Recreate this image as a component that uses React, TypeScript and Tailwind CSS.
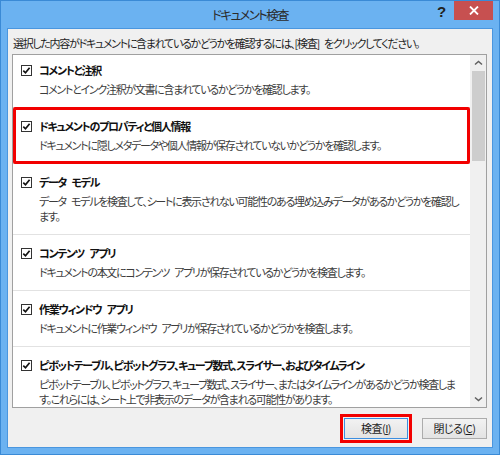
const items = [
  {
    title: "コメントと注釈",
    desc: ["コメントとインク注釈が文書に含まれているかどうかを確認します。"],
  },
  {
    title: "ドキュメントのプロパティと個人情報",
    desc: ["ドキュメントに隠しメタデータや個人情報が保存されていないかどうかを確認します。"],
    marked: true,
  },
  {
    title: "データ モデル",
    desc: [
      "データ モデルを検査して、シートに表示されない可能性のある埋め込みデータがあるかどうかを確認し",
      "ます。",
    ],
  },
  {
    title: "コンテンツ アプリ",
    desc: ["ドキュメントの本文にコンテンツ アプリが保存されているかどうかを検査します。"],
  },
  {
    title: "作業ウィンドウ アプリ",
    desc: ["ドキュメントに作業ウィンドウ アプリが保存されているかどうかを検査します。"],
  },
  {
    title: "ピボットテーブル、ピボットグラフ、キューブ数式、スライサー、およびタイムライン",
    desc: [
      "ピボットテーブル、ピボットグラフ、キューブ数式、スライサー、またはタイムラインがあるかどうか検査しま",
      "す。これらには、シート上で非表示のデータが含まれる可能性があります。",
    ],
  },
];

function CheckBox() {
  return (
    <span className="flex h-[11px] w-[11px] shrink-0 items-center justify-center border border-[#333333] bg-white">
      <svg width="9" height="9" viewBox="0 0 9 9">
        <path d="M1.3 4.6 L3.5 6.8 L7.6 1.8" fill="none" stroke="#111" strokeWidth="1.7" />
      </svg>
    </span>
  );
}

function Chevron({ down }: { down?: boolean }) {
  return (
    <svg width="9" height="6" viewBox="0 0 9 6">
      <path
        d={down ? "M1 1.5 L4.5 4.5 L8 1.5" : "M1 4.5 L4.5 1.5 L8 4.5"}
        fill="none"
        stroke="#606060"
        strokeWidth="1.5"
      />
    </svg>
  );
}

export default function App() {
  return (
    <div className="relative flex h-[455px] w-[500px] flex-col border border-[#3a8ad6] bg-[#6bb2f1] px-[6px] pb-[6px] font-['Noto_Sans_CJK_JP',sans-serif] text-[11px] tracking-[-1.3px] text-[#1e1e1e] [font-feature-settings:'palt'] [word-spacing:4px]">
      {/* Title bar */}
      <div className="flex h-[27px] shrink-0 items-center justify-center pt-[1px] text-[12.5px] leading-none tracking-[-1.6px] text-[#2b2b2b]">
        ドキュメント検査
      </div>
      <span className="absolute left-[436px] top-[3px] font-['Liberation_Sans',sans-serif] text-[15px] font-bold leading-none tracking-normal text-[#222]">
        ?
      </span>
      <div className="absolute right-[6px] top-0 flex h-[19px] w-[39px] items-center justify-center bg-[#c75050]">
        <svg width="10" height="9" viewBox="0 0 10 9">
          <path d="M1 0.5 L9 8.5 M9 0.5 L1 8.5" stroke="#fff" strokeWidth="1.8" />
        </svg>
      </div>

      {/* Client area */}
      <div className="flex flex-1 flex-col border border-[#4a96df] bg-[#f0f0f0] pl-[4px] pr-[5px]">
        <p className="whitespace-nowrap pl-[1px] pt-[6px] leading-[16px] text-[#1e1e1e]">
          選択した内容がドキュメントに含まれているかどうかを確認するには、[検査] をクリックしてください。
        </p>

        {/* List box */}
        <div className="mt-[3px] flex h-[354px] shrink-0 overflow-hidden border border-[#a0a0a0] bg-white">
          <div className="flex-1 overflow-hidden">
            {items.map((item, i) => (
              <div
                key={item.title}
                className={`relative border-b border-[#e2e2e2] pl-[8px] pb-[10px] ${i === 0 ? "pt-[7px]" : "pt-[10px]"}`}
              >
                <div className="flex h-[16px] items-center gap-[7px]">
                  <CheckBox />
                  <span className="whitespace-nowrap font-bold leading-[16px] text-[#111]">{item.title}</span>
                </div>
                <div className="mt-[4px] pl-[18px] leading-[15px] text-[#3c3c3c]">
                  {item.desc.map((line) => (
                    <div key={line} className="whitespace-nowrap">
                      {line}
                    </div>
                  ))}
                </div>
                {item.marked && (
                  <div className="absolute -top-[1px] -bottom-[1px] left-0 right-0 rounded-[2px] border-[3px] border-[#f20000]" />
                )}
              </div>
            ))}
          </div>
          {/* Scrollbar */}
          <div className="flex w-[16px] shrink-0 flex-col items-center bg-[#f0f0f0]">
            <div className="flex h-[16px] items-center justify-center">
              <Chevron />
            </div>
            <div className="h-[90px] w-[13px] bg-[#cdcdcd]" />
            <div className="flex-1" />
            <div className="flex h-[16px] items-center justify-center">
              <Chevron down />
            </div>
          </div>
        </div>

        {/* Buttons */}
        <div className="mt-[10px] flex justify-end gap-[14px] tracking-[-0.5px]">
          <div className="relative">
            <button className="flex h-[21px] w-[64px] items-center justify-center border border-[#3c8ee0] bg-gradient-to-b from-[#f2f2f2] to-[#e3e3e3] leading-none text-[#1e1e1e]">
              検査(<span className="underline">I</span>)
            </button>
            <div className="absolute -inset-[4px] border-[3px] border-[#f20000]" />
          </div>
          <button className="flex h-[21px] w-[65px] items-center justify-center border border-[#acacac] bg-gradient-to-b from-[#f2f2f2] to-[#e3e3e3] leading-none text-[#1e1e1e]">
            閉じる(<span className="underline">C</span>)
          </button>
        </div>
      </div>
    </div>
  );
}
